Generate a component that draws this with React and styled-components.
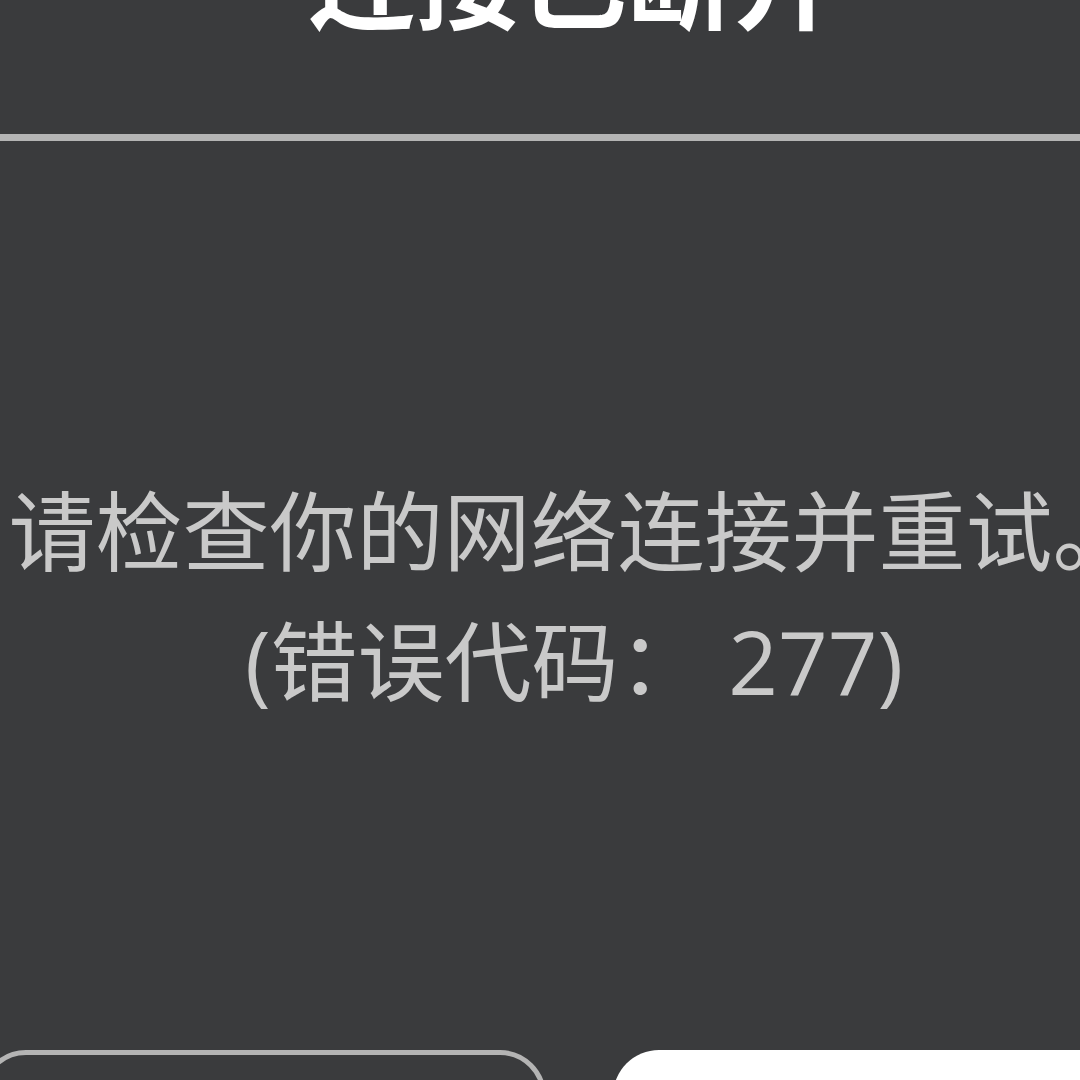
import React from "react";
import styled, { createGlobalStyle } from "styled-components";

const Global = createGlobalStyle`
  html, body {
    margin: 0;
    padding: 0;
    width: 1080px;
    height: 1080px;
    overflow: hidden;
    background: #3a3b3d;
  }
  body {
    font-family: "Noto Sans CJK SC", "Noto Sans", sans-serif;
  }
`;

const Dialog = styled.div`
  width: 1188px;
  margin-left: -20px;
  display: flex;
  flex-direction: column;
  background: #3a3b3d;
`;

const Header = styled.div`
  height: 134px;
  display: flex;
  justify-content: center;
  align-items: flex-end;
  padding-bottom: 106px;
  box-sizing: border-box;
  overflow: hidden;
`;

const Title = styled.h1`
  margin: 0;
  font-size: 106px;
  line-height: 1;
  font-weight: 700;
  color: #ffffff;
  white-space: nowrap;
`;

const Divider = styled.div`
  height: 7px;
  background: #b4b4b4;
`;

const Body = styled.div`
  height: 909px;
  display: flex;
  flex-direction: column;
  justify-content: center;
  align-items: center;
`;

const Message = styled.p`
  margin: 0;
  font-family: "Open Sans", "Noto Sans CJK SC", sans-serif;
  font-size: 87px;
  line-height: 130px;
  color: #c9c9c9;
  text-align: center;
  white-space: nowrap;
`;

const Actions = styled.div`
  display: flex;
  gap: 67px;
`;

const Button = styled.button`
  flex: 1;
  height: 180px;
  border-radius: 46px;
  box-sizing: border-box;
  font-family: inherit;
  font-size: 60px;
  border: ${(p) => (p.$primary ? "none" : "5px solid #b4b4b4")};
  background: ${(p) => (p.$primary ? "#ffffff" : "transparent")};
  color: ${(p) => (p.$primary ? "#222" : "#fff")};
`;

export default function App() {
  return (
    <>
      <Global />
      <Dialog>
        <Header>
          <Title>连接已断开</Title>
        </Header>
        <Divider />
        <Body>
          <Message>请检查你的网络连接并重试。</Message>
          <Message>(错误代码： 277)</Message>
        </Body>
        <Actions>
          <Button>离开</Button>
          <Button $primary>重新连接</Button>
        </Actions>
      </Dialog>
    </>
  );
}
